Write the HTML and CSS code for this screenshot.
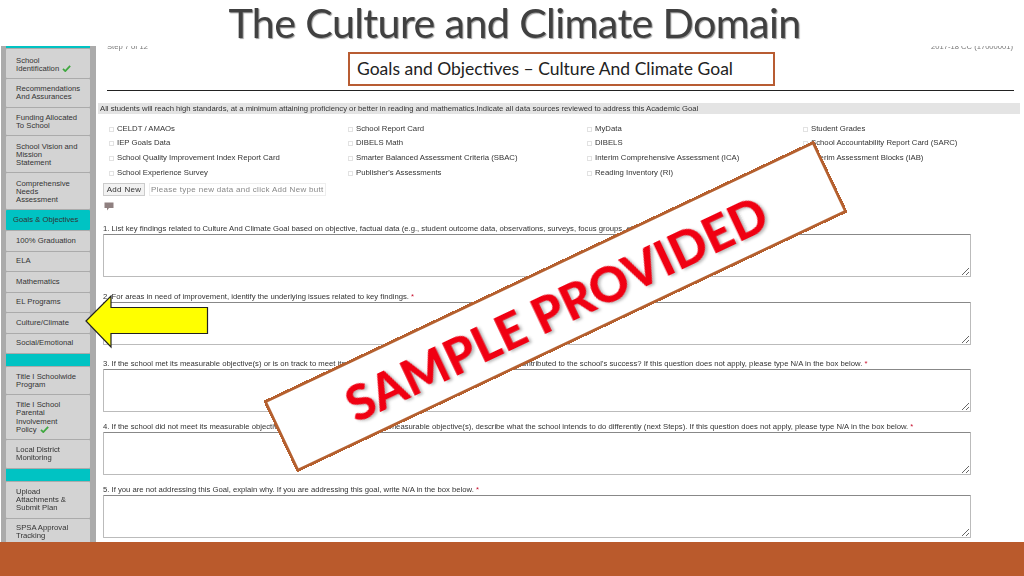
FILE: index.html
```html
<!DOCTYPE html>
<html lang="en">
<head>
<meta charset="utf-8">
<title>The Culture and Climate Domain</title>
<link rel="stylesheet" href="styles.css">
</head>
<body>
<header class="slide-title"><h1>The Culture and Climate Domain</h1></header>
<main class="shot">
  <nav class="side">
    <div class="teal teal-top"></div>
    <a class="item h29">School<br>Identification <svg class="check" viewBox="0 0 10 8"><path d="M1 4.5 L3.6 7 L9.2 1"/></svg></a>
    <a class="item h28">Recommendations<br>And Assurances</a>
    <a class="item h28">Funding Allocated<br>To School</a>
    <a class="item h36">School Vision and<br>Mission<br>Statement</a>
    <a class="item h36">Comprehensive<br>Needs<br>Assessment</a>
    <a class="item active h20">Goals &amp; Objectives</a>
    <a class="item h19">100% Graduation</a>
    <a class="item h19">ELA</a>
    <a class="item h19">Mathematics</a>
    <a class="item h19">EL Programs</a>
    <a class="item h19">Culture/Climate</a>
    <a class="item h19">Social/Emotional</a>
    <div class="teal"></div>
    <a class="item h27">Title I Schoolwide<br>Program</a>
    <a class="item h44">Title I School<br>Parental<br>Involvement<br>Policy <svg class="check" viewBox="0 0 10 8"><path d="M1 4.5 L3.6 7 L9.2 1"/></svg></a>
    <a class="item h28">Local District<br>Monitoring</a>
    <div class="teal"></div>
    <a class="item h36">Upload<br>Attachments &amp;<br>Submit Plan</a>
    <a class="item h28 last">SPSA Approval<br>Tracking</a>
  </nav>
  <section class="content">
    <div class="step-row"><span>Step 7 of 12</span><span>2017-18 CC (17000001)</span></div>
    <div class="rule"></div>
    <div class="goal">All students will reach high standards, at a minimum attaining proficiency or better in reading and mathematics.Indicate all data sources reviewed to address this Academic Goal</div>
    <div class="sources">
      <label><i></i>CELDT / AMAOs</label><label><i></i>School Report Card</label><label><i></i>MyData</label><label><i></i>Student Grades</label>
      <label><i></i>IEP Goals Data</label><label><i></i>DIBELS Math</label><label><i></i>DIBELS</label><label><i></i>School Accountability Report Card (SARC)</label>
      <label><i></i>School Quality Improvement Index Report Card</label><label><i></i>Smarter Balanced Assessment Criteria (SBAC)</label><label><i></i>Interim Comprehensive Assessment (ICA)</label><label><i></i>Interim Assessment Blocks (IAB)</label>
      <label><i></i>School Experience Survey</label><label><i></i>Publisher's Assessments</label><label><i></i>Reading Inventory (RI)</label>
    </div>
    <div class="add-row"><button class="add-btn">Add New</button><span class="add-input">Please type new data and click Add New butt</span></div>
    <svg class="comment" viewBox="0 0 10 9"><path d="M0.5 0.5 H9.5 V6 H5 L3 8.5 V6 H0.5 Z"/></svg>
    <div class="q q1"><p>1. List key findings related to Culture And Climate Goal based on objective, factual data (e.g., student outcome data, observations, surveys, focus groups, etc.).</p><textarea></textarea></div>
    <div class="q q2"><p>2. For areas in need of improvement, identify the underlying issues related to key findings. <b>*</b></p><textarea></textarea></div>
    <div class="q q3"><p>3. If the school met its measurable objective(s) or is on track to meet its measurable objective(s), describe what may have contributed to the school's success? If this question does not apply, please type N/A in the box below. <b>*</b></p><textarea></textarea></div>
    <div class="q q3"><p>4. If the school did not meet its measurable objective(s) or is not on track to meet its measurable objective(s), describe what the school intends to do differently (next Steps). If this question does not apply, please type N/A in the box below. <b>*</b></p><textarea></textarea></div>
    <div class="q"><p>5. If you are not addressing this Goal, explain why. If you are addressing this goal, write N/A in the box below. <b>*</b></p><textarea></textarea></div>
  </section>
</main>
<footer class="band"></footer>

<div class="subtitle">Goals and Objectives – Culture And Climate Goal</div>
<svg class="arrow" viewBox="0 0 126 54"><path d="M1 26 L26 1 V12.5 H122.5 V38.5 H26 V52 Z"/></svg>
<div class="stamp"><span>SAMPLE PROVIDED</span></div>
</body>
</html>
```
FILE: styles.css
```css
* { box-sizing: border-box; }
html, body { margin: 0; padding: 0; }
body {
  position: relative;
  width: 1024px;
  height: 576px;
  overflow: hidden;
  background: #fff;
  display: flex;
  flex-direction: column;
  font-family: "Liberation Sans", Arial, sans-serif;
}
.slide-title {
  height: 46px;
  flex: none;
  text-align: center;
  background: #fff;
  position: relative;
  z-index: 1;
}
.slide-title h1 {
  margin: 0;
  padding-left: 5px;
  font-family: Lato, sans-serif;
  font-weight: 400;
  font-size: 41.2px;
  line-height: 46px;
  margin-top: -1px;
  color: #404040;
  letter-spacing: -0.6px;
  text-shadow: 1px 1px 1px #9a9a9a;
  white-space: nowrap;
}
.shot {
  flex: 1;
  min-height: 0;
  display: flex;
  overflow: hidden;
  filter: blur(0.35px);
}
.side {
  flex: none;
  width: 95px;
  margin-left: 1px;
  padding: 0 6px 0 5px;
  display: flex;
  flex-direction: column;
  gap: 1px;
  background: #ababab;
  font-size: 7.7px;
  line-height: 8.2px;
  color: #333;
}
.teal { height: 12px; background: #00c3c3; flex: none; }
.teal-top { height: 2px; }
.item {
  flex: none;
  display: block;
  padding: 0 2px 0 10px;
  background: #d3d3d3;
  border-radius: 1px;
  white-space: nowrap;
}
.h19 { height: 19.5px; padding-top: 5.5px; }
.h20 { height: 20px; padding-top: 6px; }
.h27 { height: 27px; padding-top: 6px; }
.h28 { height: 27.5px; padding-top: 6px; }
.h29 { height: 29px; padding-top: 8px; }
.h36 { height: 36px; padding-top: 6.5px; }
.h44 { height: 44px; padding-top: 6px; line-height: 8.4px; }
.last { padding-top: 5px; }
.active { background: #00c3c3; padding-left: 7px; }
.check { width: 9px; height: 7px; vertical-align: -1px; margin-left: 1px; }
.check path { fill: none; stroke: #3fa83f; stroke-width: 2; }
.content {
  flex: 1;
  min-width: 0;
  padding: 0 4px 0 2px;
  font-size: 7.7px;
  color: #333;
}
.step-row {
  display: flex;
  justify-content: space-between;
  margin: -4px 7px 0 9px;
  height: 10px;
  line-height: 10px;
  font-size: 7.6px;
  color: #777;
}
.rule { height: 1px; background: #222; margin: 38px 6px 0 9px; }
.goal {
  margin-top: 12px;
  padding-left: 2px;
  height: 11px;
  line-height: 11px;
  background: #e4e4e4;
  white-space: nowrap;
}
.sources {
  display: grid;
  grid-template-columns: 239px 239px 216px 1fr;
  grid-auto-rows: 14.6px;
  margin: 7px 0 0 11px;
  align-items: center;
  font-size: 7.75px;
}
.sources label { display: flex; align-items: center; white-space: nowrap; }
.sources i {
  width: 5px;
  height: 5px;
  margin: 2px 3px 0 0;
  border: 1px solid #e2e2e2;
  flex: none;
}
.add-row { display: flex; gap: 4px; margin: 4px 0 0 5px; height: 13px; }
.add-btn {
  width: 42px;
  height: 13px;
  padding: 0;
  font: 8px/11px "Liberation Sans", sans-serif;
  letter-spacing: 0.3px;
  color: #333;
  background: #f2f2f2;
  border: 1px solid #ccc;
}
.add-input {
  width: 177px;
  padding-left: 1px;
  line-height: 12px;
  font-size: 8px;
  letter-spacing: 0.3px;
  color: #888;
  border: 1px solid #eee;
  white-space: nowrap;
  overflow: hidden;
}
.comment { display: block; width: 10px; height: 9px; margin: 6px 0 0 6px; }
.comment path { fill: #8f8080; }
.q { margin: 0 0 0 5px; }
.q1 { margin-top: 12.5px; margin-bottom: 15px; }
.q2 { margin-bottom: 14px; }
.q3 { margin-bottom: 10px; }
.q p { margin: 0; height: 10px; line-height: 10px; white-space: nowrap; }
.q b { color: #c8102e; font-weight: 400; }
.q textarea {
  display: block;
  width: 868px;
  height: 43px;
  margin: 0;
  padding: 0;
  background: #fff;
  border: 1px solid #bbb;
  border-top-color: #888;
  border-radius: 1px;
}
.band { height: 34px; flex: none; background: #ba5a2c; }
.subtitle {
  position: absolute;
  left: 348px;
  top: 52px;
  width: 427px;
  height: 34px;
  padding-left: 7px;
  background: #fff;
  border: 2.5px solid #b85c32;
  font-family: Lato, sans-serif;
  font-size: 17.5px;
  line-height: 29px;
  color: #222;
  white-space: nowrap;
}
.arrow {
  position: absolute;
  left: 85px;
  top: 295px;
  width: 126px;
  height: 54px;
}
.arrow path { fill: #ffff00; stroke: #222; stroke-width: 1.2; }
.stamp {
  position: absolute;
  left: 251px;
  top: 267px;
  width: 609px;
  height: 79px;
  transform: rotate(-25.3deg);
  background: #fff;
  border: 3px solid #b5602f;
  display: flex;
  align-items: center;
  justify-content: center;
  padding-top: 3px;
  font-family: Lato, sans-serif;
  font-weight: 900;
  font-size: 49px;
  letter-spacing: 0.3px;
  color: #f00012;
  text-shadow: 2px 2px 3px #bbb;
  white-space: nowrap;
}
```
